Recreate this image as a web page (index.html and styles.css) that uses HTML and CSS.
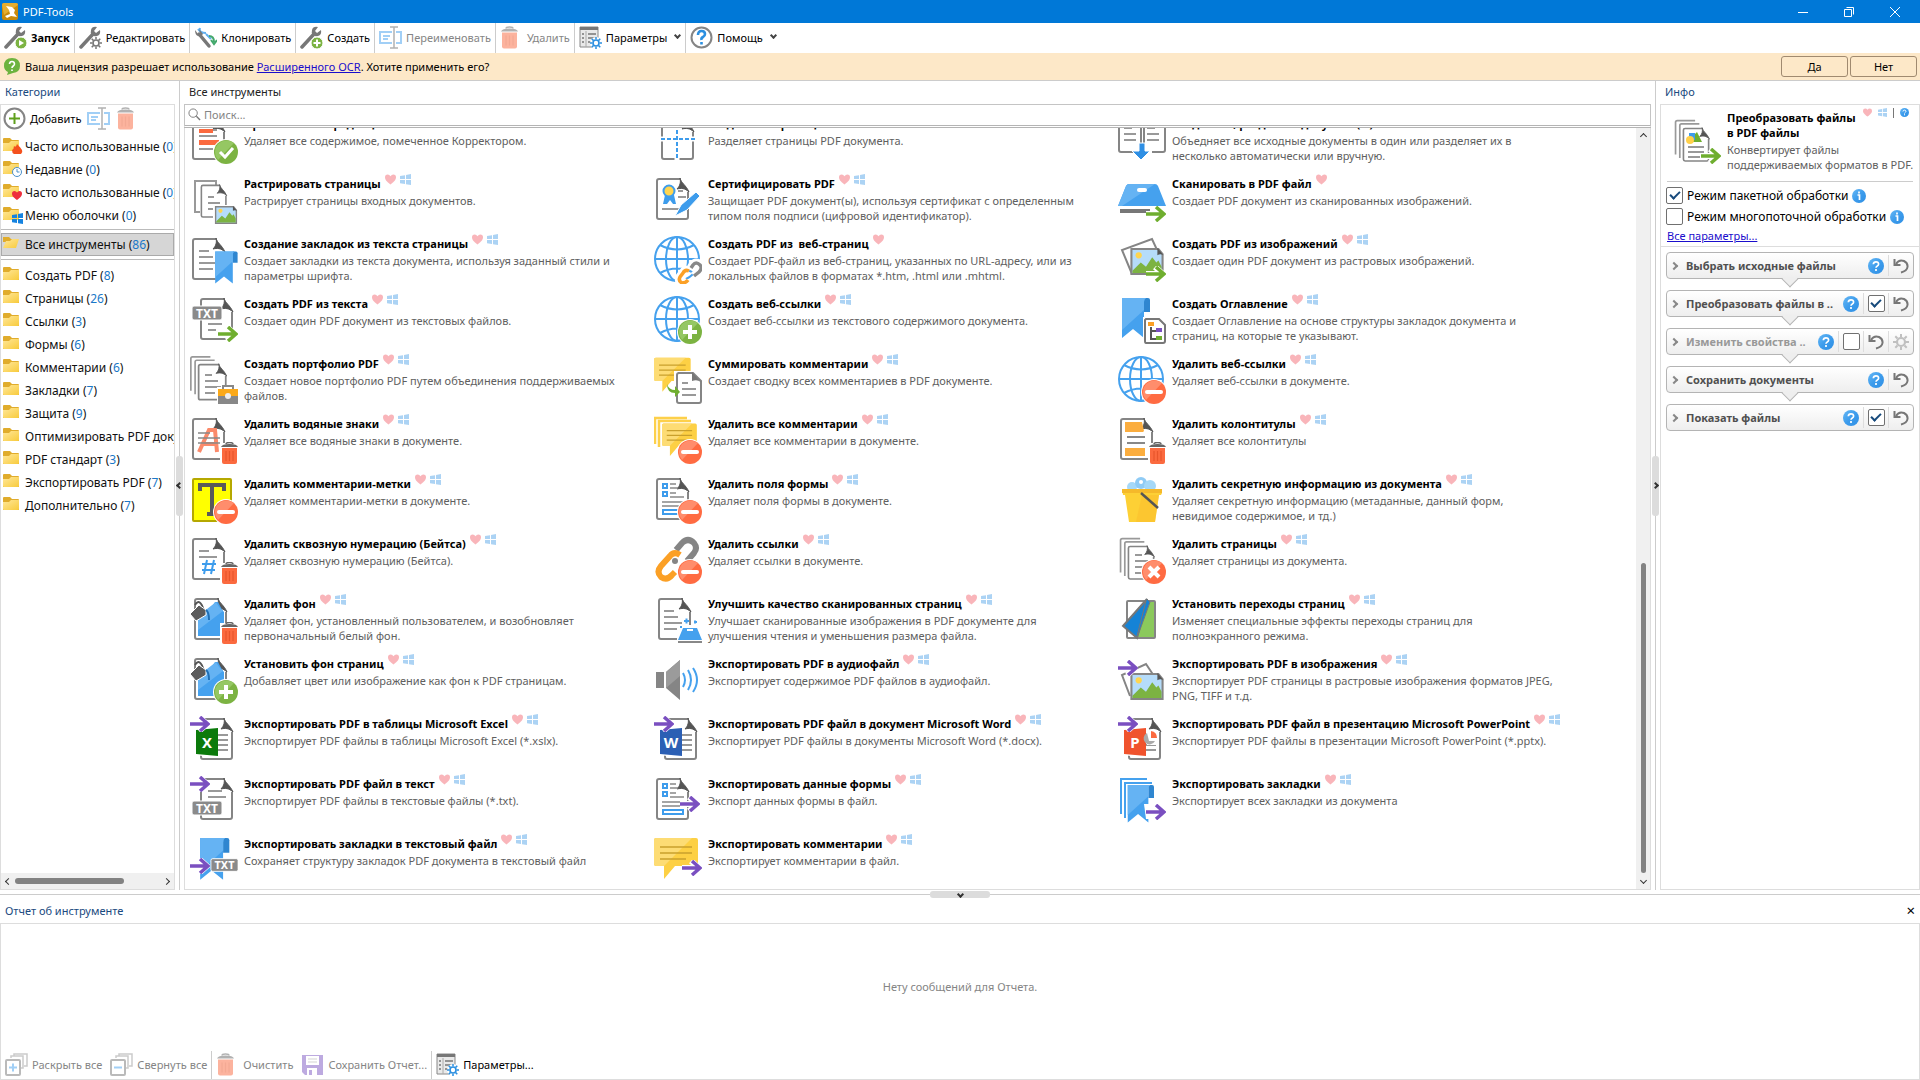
FILE: index.html
```html
<!DOCTYPE html>
<html lang="ru">
<head>
  <meta charset="UTF-8">
  <meta name="viewport" content="width=device-width, initial-scale=1.0">
  <title>PDF-Tools</title>
  <link rel="stylesheet" href="styles.css">
</head>
<body>
  <svg class="gradients" aria-hidden="true">
    <defs>
      <linearGradient id="gFolder" x1="0" y1="0" x2="1" y2="1"><stop offset="0" stop-color="#ffe79a"/><stop offset="1" stop-color="#f8cb3c"/></linearGradient>
      <linearGradient id="gHelp" x1="0" y1="0" x2="1" y2="1"><stop offset="0" stop-color="#66b8f5"/><stop offset=".5" stop-color="#3d9cec"/><stop offset="1" stop-color="#2f8fe4"/></linearGradient>
    </defs>
  </svg>

  <!-- icon sprite -->
  <svg class="sprite" aria-hidden="true">
    <!-- building blocks -->
    <symbol id="page" viewBox="0 0 48 48"><path d="M24 3H5Q3 3 3 5v36q0 2 2 2h27q2 0 2-2V16L26 3z" fill="#fff"/><path d="M26 3H5Q3 3 3 5v36q0 2 2 2h27q2 0 2-2V16" fill="none" stroke="#858585" stroke-width="2"/><path d="M26 2C27 7 32 9 35 16C31 12 27 12 23 13C26 10 27 6 26 2" fill="#555" stroke="#555"/></symbol>
    <symbol id="lines" viewBox="0 0 48 48"><path d="M9 15h10M9 21h14M9 27h18M9 33h14" stroke="#999" stroke-width="2"/></symbol>
    <symbol id="back" viewBox="0 0 48 48"><path d="M3 43V5q0-2 2-2h21" fill="none" stroke="#999" stroke-width="2"/></symbol>
    <symbol id="check" viewBox="0 0 48 48"><circle cx="36" cy="36" r="13" fill="#fff"/><circle cx="36" cy="36" r="12" fill="#7cb342"/><path d="M28 28a12 12 0 0 1 16-1L28 44a12 12 0 0 1 0-16" fill="#95c763"/><path d="M30 36l5 5 8-9" fill="none" stroke="#fff" stroke-width="3"/></symbol>
    <symbol id="plus" viewBox="0 0 48 48"><circle cx="36" cy="36" r="13" fill="#fff"/><circle cx="36" cy="36" r="12" fill="#7cb342"/><path d="M28 28a12 12 0 0 1 16-1L28 44a12 12 0 0 1 0-16" fill="#95c763"/><path d="M29 36h14M36 29v14" stroke="#fff" stroke-width="4"/></symbol>
    <symbol id="minus" viewBox="0 0 48 48"><circle cx="36" cy="36" r="13" fill="#fff"/><circle cx="36" cy="36" r="12" fill="#ff6b42"/><path d="M28 28a12 12 0 0 1 16-1L28 44a12 12 0 0 1 0-16" fill="#ff8d6c"/><path d="M29 36h14" stroke="#fff" stroke-width="4" stroke-linecap="round"/></symbol>
    <symbol id="cross" viewBox="0 0 48 48"><circle cx="36" cy="36" r="13" fill="#fff"/><circle cx="36" cy="36" r="12" fill="#ff6b42"/><path d="M28 28a12 12 0 0 1 16-1L28 44a12 12 0 0 1 0-16" fill="#ff8d6c"/><path d="M31 31l10 10M41 31l-10 10" stroke="#fff" stroke-width="4"/></symbol>
    <symbol id="trash" viewBox="0 0 17 22"><path d="M5 2q0-1.500 3.500-1.500T12 2" fill="none" stroke="#666" stroke-width="1.500"/><path d="M0 5Q1 2 8.500 2T17 5z" fill="#666"/><path d="M1 6h15v14q0 2-2 2H3q-2 0-2-2z" fill="#fb6a3f"/><path d="M5 9v10M8.500 9v10M12 9v10" stroke="#e8552b" stroke-width="1.200"/></symbol>
    <symbol id="trashBadge" viewBox="0 0 48 48"><path d="M30 27h18v21H30z" fill="#fff"/><use href="#trash" x="31" y="26" width="17" height="22"/></symbol>
    <symbol id="arrow" viewBox="0 0 20 16"><path d="M0 8h17M9 1l8 7-8 7" fill="none" stroke="#fff" stroke-width="6"/><path d="M0 8h17M10 1l8 7-8 7" fill="none" stroke="currentColor" stroke-width="3.500"/></symbol>
    <symbol id="globe" viewBox="0 0 48 48"><g fill="none" stroke="#45a1ee" stroke-width="2"><circle cx="23" cy="23" r="22"/><ellipse cx="23" cy="23" rx="11" ry="22"/><path d="M23 1v44M1 23h44M6 9q17 9 34 0M6 37q17-9 34 0"/></g></symbol>
    <symbol id="bookmark" viewBox="0 0 48 48"><path d="M26 2h4q2 0 2 2v12h-6z" fill="#2f86d0"/><path d="M4 2h24q-2 1-2 4v36l-11-9-11 9z" fill="#45a1ee"/><path d="M4 2h24q-2 1-2 4v8L4 34z" fill="#65b3f3"/></symbol>
    <symbol id="comment" viewBox="0 0 48 48"><path d="M2 2h40q2 0 2 2v24q0 2-2 2H21L10 43V30H2q-2 0-2-2V4q0-2 2-2" fill="#fdd044"/><path d="M2 2h36L10 30H2q-2 0-2-2V4q0-2 2-2" fill="#fddc74"/><path d="M6 11h32M6 17h32M6 23h26" stroke="#c9a02c" stroke-width="1.600"/></symbol>
    <symbol id="picture" viewBox="0 0 32 26"><path d="M1 1h26l4 5v19H1z" fill="#b5dcfa" stroke="#858585" stroke-width="2"/><circle cx="8" cy="7" r="3" fill="#ffd54f"/><path d="M2 22l8-8 5 4 6-9 4 5 2-2 3 6v6H2z" fill="#7cb342"/><path d="M26 0l6 7q-3-2-6 0z" fill="#555"/></symbol>
    <symbol id="txt" viewBox="0 0 32 16"><rect x="1" y="1" width="30" height="14" rx="2" fill="#8a8a8a" stroke="#fff"/><text x="16" y="12.500" text-anchor="middle" class="txt-label">TXT</text></symbol>
    <symbol id="heart" viewBox="0 0 10 10"><path d="M5 9.500C1 6.500 0 5 0 3q0-2.500 2.500-2.500Q4 .5 5 2q1-1.500 2.500-1.500Q10 .5 10 3c0 2-1 3.500-5 6.500" fill="#ee2f3d"/></symbol>
    <symbol id="win" viewBox="0 0 11 11"><path d="M0 2l5-.8V5H0zM6 1l5-1v5H6zM0 6h5v4L0 9.300zM6 6h5v5l-5-.8z" fill="#1583e0"/></symbol>
    <symbol id="help" viewBox="0 0 16 16"><circle cx="8" cy="8" r="8" fill="url(#gHelp)"/><path d="M5.300 6.200Q5.500 3.800 8 3.800t2.600 2.200q0 1.200-1.300 1.900T8 9.800M8 11v2" fill="none" stroke="#fff" stroke-width="1.700"/></symbol>
    <symbol id="info" viewBox="0 0 14 14"><circle cx="7" cy="7" r="7" fill="url(#gHelp)"/><path d="M5.500 6H7.500v5M7 2.600v1.800" fill="none" stroke="#fff" stroke-width="1.700"/></symbol>
    <symbol id="wrench" viewBox="0 0 23 23"><path d="M2 21L14 8" stroke="#777" stroke-width="3.500" stroke-linecap="round"/><path d="M21 4l-4 3-2-2 3-4Q13 0 12 4q-1 3 1 5t5 1q4-1 3-6" fill="#777"/></symbol>
    <symbol id="gear" viewBox="0 0 16 16"><circle cx="8" cy="8" r="4" fill="none" stroke="currentColor" stroke-width="2.200"/><path d="M8 0v3M8 13v3M0 8h3M13 8h3M2.300 2.300l2.200 2.200M11.500 11.500l2.200 2.200M2.300 13.700l2.200-2.200M11.500 4.500l2.200-2.200" stroke="currentColor" stroke-width="2"/></symbol>
    <symbol id="undo" viewBox="0 0 16 16"><path d="M3 6Q6 1 11 3q4 2 3.500 6T8 14.500" fill="none" stroke="#777" stroke-width="2"/><path d="M1.500 1v6H7.500" fill="none" stroke="#777" stroke-width="2"/></symbol>
    <symbol id="folder" viewBox="0 0 20 18"><path d="M0 1q0-1 1-1h6l2 2h6q1 0 1 1v10H0z" fill="#e0ac2c"/><path d="M0 5h6l2-2h8v9q0 1-1 1H1q-1 0-1-1z" fill="url(#gFolder)"/></symbol>

    <!-- toolbar icons -->
    <symbol id="tRun" viewBox="0 0 23 23"><use href="#wrench"/><circle cx="17" cy="17" r="6" fill="#7cb342" stroke="#fff"/><path d="M15 14l5 3-5 3z" fill="#fff"/></symbol>
    <symbol id="tEdit" viewBox="0 0 23 23"><use href="#wrench"/><circle cx="17" cy="17" r="6" fill="#fff"/><use href="#gear" x="11" y="11" width="12" height="12" color="#777"/></symbol>
    <symbol id="tClone" viewBox="0 0 23 23"><path d="M12 8l5 5M6 2q-1 3 1 4t5 1M4 3l4 5" stroke="#62b0ef" stroke-width="2" fill="none"/><path d="M5 8l10 12" stroke="#777" stroke-width="3.500" stroke-linecap="round"/><path d="M1 4q0 5 3 6t5-2L5 3l1 4-2 1z" fill="#777"/><path d="M15 10q5 0 5 6m-3-2l3 4 3-4" fill="none" stroke="#43a86b" stroke-width="2"/></symbol>
    <symbol id="tNew" viewBox="0 0 23 23"><use href="#wrench"/><circle cx="17" cy="17" r="6" fill="#7cb342" stroke="#fff"/><path d="M13.500 17h7M17 13.500v7" stroke="#fff" stroke-width="2"/></symbol>
    <symbol id="tRename" viewBox="0 0 23 23"><path d="M13 6H1v11h12M17 6h5v11h-5M4 10h7M4 13h5" fill="none" stroke="#45a1ee" stroke-width="2"/><path d="M11 1h8M15 1v21M11 22h8" stroke="#666" stroke-width="1.500"/></symbol>
    <symbol id="tTrash" viewBox="0 0 23 23"><use href="#trash" x="1" y="0" width="17" height="23"/></symbol>
    <symbol id="tParams" viewBox="0 0 23 23"><path d="M1 1h18v20H1z" fill="#e9e9e9" stroke="#888"/><path d="M1 1h18v3H1z" fill="#777"/><path d="M7 5v16" stroke="#aaa"/><path d="M3 8h2M3 12h2M3 16h2M9 8h8M9 12h8M9 16h5" stroke="#777" stroke-width="1.500"/><circle cx="17" cy="17" r="6" fill="#fff"/><use href="#gear" x="11" y="11" width="12" height="12" color="#2b8fe0"/></symbol>
    <symbol id="tHelp" viewBox="0 0 23 23"><circle cx="11.500" cy="11.500" r="10" fill="#fff" stroke="#858585" stroke-width="2"/><path d="M8 9q0-4 3.500-4t3.500 3q0 2-2 3t-1.500 3M11.500 16v2.500" fill="none" stroke="#2b8fe0" stroke-width="2.600"/></symbol>
    <symbol id="tAdd" viewBox="0 0 23 23"><circle cx="11.500" cy="11.500" r="10" fill="#fff" stroke="#858585" stroke-width="2"/><path d="M6 11.500h11M11.500 6v11" stroke="#5fa01c" stroke-width="2"/></symbol>
    <symbol id="tExpand" viewBox="0 0 23 23"><path d="M6 5V3h12v12h-2M9 3V1h13v12h-3" fill="none" stroke="#999" stroke-width="1.500"/><rect x="1" y="7" width="14" height="15" rx="1" fill="#fff" stroke="#777" stroke-width="2"/><path d="M4 14.500h8M8 10.500v8" stroke="#45a1ee" stroke-width="2"/></symbol>
    <symbol id="tCollapse" viewBox="0 0 23 23"><path d="M6 5V3h12v12h-2M9 3V1h13v12h-3" fill="none" stroke="#999" stroke-width="1.500"/><rect x="1" y="7" width="14" height="15" rx="1" fill="#fff" stroke="#777" stroke-width="2"/><path d="M4 14.500h8" stroke="#45a1ee" stroke-width="2"/></symbol>
    <symbol id="tSave" viewBox="0 0 23 23"><path d="M1 2h21v20H4l-3-3z" fill="#7e57c2"/><path d="M5 3h13v9H5zM6 15h10v7H6z" fill="#fff"/><path d="M7 6h9M7 9h9" stroke="#aaa"/><path d="M8 17h3v5H8z" fill="#7e57c2"/></symbol>

    <!-- tool icons -->
    <symbol id="iRedact" viewBox="0 0 48 48"><use href="#page"/><path d="M9 14h18M9 20h18M9 26h12M9 33h14" stroke="#999" stroke-width="2"/><path d="M9 13h14v4H9zM9 24h20v5H9z" fill="#fb6a3f"/><use href="#check"/></symbol>
    <symbol id="iSplit" viewBox="0 0 48 48"><use href="#page" x="5"/><path d="M6 23h38M23 1v45" stroke="#fff" stroke-width="5"/><path d="M7 23h35M23 2v42" stroke="#3d9cec" stroke-width="2" stroke-dasharray="4 2"/></symbol>
    <symbol id="iMerge" viewBox="0 0 48 48"><g fill="#fff" stroke="#858585" stroke-width="2"><path d="M14 3H3q-2 0-2 2v29q0 2 2 2h13M34 36h11q2 0 2-2V10l-6-7H26v28M23 31V10l-6-7"/></g><path d="M6 12h8M6 18h12M6 24h12M29 12h8M29 18h12M29 24h12" stroke="#999" stroke-width="2"/><path d="M15 3l8 9q-5-2-8 0zM40 3l8 9q-5-2-8 0z" fill="#555"/><path d="M21 27h6v8h5l-9 9-9-9h7z" fill="#2f8fe4" stroke="#fff"/></symbol>
    <symbol id="iRaster" viewBox="0 0 48 48"><path d="M10 36H5V5h21v4" fill="none" stroke="#999" stroke-width="2"/><use href="#page" x="9" y="7" width="38" height="38"/><path d="M18 21h6M18 27h12M18 33h6" stroke="#999" stroke-width="2"/><path d="M23 29h25v19H23z" fill="#fff"/><use href="#picture" x="24" y="30" width="24" height="18"/></symbol>
    <symbol id="iMarkText" viewBox="0 0 48 48"><use href="#page"/><use href="#lines"/><path d="M25 18h17l5-2v12h-3v19H26z" fill="#fff"/><g transform="translate(22 14) scale(.8)"><use href="#bookmark" width="48" height="48"/></g></symbol>
    <symbol id="iTxt" viewBox="0 0 48 48"><use href="#page" x="8"/><path d="M18 28h14M18 34h8" stroke="#999" stroke-width="2"/><use href="#txt" x="1" y="9" width="32" height="16"/><use href="#arrow" x="28" y="30" width="20" height="16" color="#6fae2f"/></symbol>
    <symbol id="iPortfolio" viewBox="0 0 48 48"><g transform="scale(.85)"><use href="#back" x="-2" y="-2" width="48" height="48"/><use href="#back" x="3" y="2" width="48" height="48"/></g><use href="#page" x="6" y="6" width="42" height="42"/><path d="M15 19h7M15 25h13M15 31h16M15 37h10" stroke="#999" stroke-width="2"/><path d="M27 31h21v17H27z" fill="#fff"/><path d="M33 33v-3h10v3" fill="none" stroke="#888" stroke-width="2"/><path d="M28 33h20v7H28z" fill="#fba919"/><path d="M28 40h20v8H28z" fill="#888"/><circle cx="38" cy="40" r="3" fill="#eee"/></symbol>
    <symbol id="iWatermark" viewBox="0 0 48 48"><use href="#page"/><path d="M9 36l10-22h6l2 22M14 28h12" fill="none" stroke="#fb8a6a" stroke-width="4"/><path d="M8 17h12M8 22h22M8 27h22" stroke="#888" stroke-width="1.500"/><use href="#trashBadge"/></symbol>
    <symbol id="iMarkup" viewBox="0 0 48 48"><rect x="3" y="3" width="38" height="42" rx="1" fill="#ff0" stroke="#b5a800" stroke-width="2"/><path d="M10 15v-6h24v6M22 9v28M17 38h10" fill="none" stroke="#5a5a5a" stroke-width="4"/><use href="#minus"/></symbol>
    <symbol id="iBates" viewBox="0 0 48 48"><use href="#page"/><path d="M9 15h10M9 21h18" stroke="#999" stroke-width="2"/><path d="M17 24l-3 14M24 24l-3 14M12 28h14M12 34h13" stroke="#3d9cec" stroke-width="2"/><use href="#trashBadge"/></symbol>
    <symbol id="fon" viewBox="0 0 48 48"><use href="#page" x="2"/><path d="M8 16h10l7-10h3q4 8 6 10v24H8z" fill="#45a1ee"/><path d="M8 20l18-14q3 6 7 9L8 34z" fill="#65b3f3"/><path d="M5 9q5-8 9 6" fill="none" stroke="#555" stroke-width="2"/><path d="M0 18l9-9 7 5v5L6 25z" fill="#5c5c5c" stroke="#fff"/><path d="M16 14q3 2 3 10" fill="none" stroke="#1f6fb5" stroke-width="2"/></symbol>
    <symbol id="iFonDel" viewBox="0 0 48 48"><use href="#fon"/><use href="#trashBadge"/></symbol>
    <symbol id="iFonAdd" viewBox="0 0 48 48"><use href="#fon"/><use href="#plus"/></symbol>
    <symbol id="office" viewBox="0 0 48 48"><use href="#page" x="8"/><path d="M28 19h10M28 24h10M28 29h10M28 34h10" stroke="#999" stroke-width="2"/><path d="M5 13l23-3v32L5 39z" fill="#fff"/><path d="M6 14l22-2v28L6 38z" fill="currentColor"/><use href="#arrow" y="0" width="20" height="16" color="#7a4fc0"/></symbol>
    <symbol id="iExcel" viewBox="0 0 48 48"><use href="#office" color="#0b7a0b"/><text x="17" y="32" text-anchor="middle" class="office-letter">X</text></symbol>
    <symbol id="iWord" viewBox="0 0 48 48"><use href="#office" color="#2b5fb4"/><text x="17" y="32" text-anchor="middle" class="office-letter">W</text></symbol>
    <symbol id="iPower" viewBox="0 0 48 48"><use href="#office" color="#f0532d"/><path d="M29 18h12v11H29z" fill="#fff"/><path d="M29 17a6 6 0 1 0 8 8h-6z" fill="#aaa"/><path d="M33 15v7h6q0-6-6-7" fill="#fb6a3f"/><text x="17" y="32" text-anchor="middle" class="office-letter">P</text></symbol>
    <symbol id="iToTxt" viewBox="0 0 48 48"><use href="#page" x="8"/><path d="M18 15h14M18 21h18" stroke="#999" stroke-width="2"/><use href="#txt" x="1" y="24" width="32" height="16"/><use href="#arrow" width="20" height="16" color="#7a4fc0"/></symbol>
    <symbol id="iMarkTxt" viewBox="0 0 48 48"><use href="#bookmark" x="6" y="0" width="50" height="50"/><use href="#arrow" y="22" width="20" height="16" color="#7a4fc0"/><use href="#txt" x="20" y="21" width="29" height="16"/></symbol>
    <symbol id="iCert" viewBox="0 0 48 48"><use href="#page"/><path d="M24 15h5M24 21h8M8 33h17" stroke="#999" stroke-width="2"/><path d="M11 19l-2 9h4l3-4 3 4h3l-2-9z" fill="#3d9cec"/><circle cx="15" cy="15" r="5.500" fill="#ffd54f" stroke="#3d9cec" stroke-width="2"/><path d="M21 40l6-11L42 16l4 4-13 14z" fill="#3d9cec" stroke="#fff"/></symbol>
    <symbol id="iWebPdf" viewBox="0 0 48 48"><use href="#globe"/><g fill="none" stroke="#fff" stroke-width="9"><path d="M37 32l2-3q3-4 7 0 3 3-1 7l-5 4M35 35q-4-2-6 2l-3 4q-2 4 2 6 4 0 6-3"/></g><path d="M37 32l2-3q3-4 7 0 3 3-1 7l-5 4" fill="none" stroke="#888" stroke-width="3.500"/><path d="M35 35q-4-2-6 2l-3 4q-2 4 2 6 4 0 6-3" fill="none" stroke="#fba026" stroke-width="3.500"/></symbol>
    <symbol id="iWebAdd" viewBox="0 0 48 48"><use href="#globe"/><use href="#plus"/></symbol>
    <symbol id="iWebDel" viewBox="0 0 48 48"><use href="#globe"/><use href="#minus"/></symbol>
    <symbol id="iSummary" viewBox="0 0 48 48"><use href="#comment" width="40" height="40"/><path d="M20 15h28v33H20z" fill="#fff"/><path d="M24 17h15l8 8v20q0 2-2 2H25q-2 0-2-2V19q0-2 2-2" fill="#fff" stroke="#858585" stroke-width="2"/><path d="M38 16l9 10q-4-3-9-1z" fill="#777"/><path d="M28 27h6M28 33h14M28 39h14" stroke="#999" stroke-width="2"/><path d="M13 28q2 6 8 6v-4l5 6-5 5v-4q-8 0-8-9" fill="#6fae2f"/></symbol>
    <symbol id="iCommentsDel" viewBox="0 0 48 48"><path d="M1 28V2h32M5 31V5h32" fill="none" stroke="#fdd04a" stroke-width="2.500"/><use href="#comment" x="8" y="6" width="38" height="38"/><use href="#minus"/></symbol>
    <symbol id="form" viewBox="0 0 48 48"><use href="#page"/><path d="M16 8h6M16 12h8M16 17h6M16 21h14M8 26h22M8 30h22" stroke="#888" stroke-width="1.600"/><path d="M9 8h4v4H9zM9 16h4v4H9zM9 34h20v4H9z" fill="#fff" stroke="#3d9cec" stroke-width="2"/></symbol>
    <symbol id="iFormDel" viewBox="0 0 48 48"><use href="#form"/><use href="#minus"/></symbol>
    <symbol id="iFormExp" viewBox="0 0 48 48"><use href="#form"/><use href="#arrow" x="26" y="20" width="20" height="16" color="#7a4fc0"/></symbol>
    <symbol id="iLinkDel" viewBox="0 0 48 48"><g fill="none" stroke-width="6"><path d="M22 14l6-7q6-6 12 0 4 5 0 10l-7 8" stroke="#858585"/><path d="M26 19q-6-4-10 1L7 30q-5 6 0 11 6 4 11-2l3-3" stroke="#fba026"/></g><circle cx="21" cy="25" r="3" fill="#858585"/><use href="#minus"/></symbol>
    <symbol id="iEnhance" viewBox="0 0 48 48"><use href="#page" x="2"/><use href="#lines" x="1"/><path d="M23 29h25v18H23z" fill="#fff"/><path d="M29 32h14l5 12H24z" fill="#45a1ee"/><path d="M33 34h6" stroke="#fff" stroke-width="2"/><path d="M24 46h24" stroke="#888" stroke-width="2"/><path d="M30 25h5M32.500 22.500v5M40 26h3M41 24.500v3M26 31h2" stroke="#45a1ee" stroke-width="2"/></symbol>
    <symbol id="iAudio" viewBox="0 0 48 48"><path d="M2 16h8v16H2zM12 16L26 4v40L12 32z" fill="#858585"/><path d="M12 16L26 4v16L12 32z" fill="#9b9b9b"/><path d="M29 17q4 7 0 14M34 14q6 10 0 20M39 12q8 12 0 24" fill="none" stroke="#45a1ee" stroke-width="2"/></symbol>
    <symbol id="iCommentsExp" viewBox="0 0 48 48"><use href="#comment"/><use href="#arrow" x="28" y="24" width="20" height="16" color="#7a4fc0"/></symbol>
    <symbol id="iScan" viewBox="0 0 48 48"><path d="M11 8h26q2 0 3 2l8 20H0l8-20q1-2 3-2" fill="#45a1ee"/><path d="M11 8h26L4 30H0l8-20q1-2 3-2" fill="#65b3f3"/><rect x="19" y="12" width="10" height="4" rx="2" fill="#fff"/><path d="M2 35h30" stroke="#777" stroke-width="4"/><use href="#arrow" x="28" y="30" width="20" height="16" color="#6fae2f"/></symbol>
    <symbol id="iImages" viewBox="0 0 48 48"><path d="M14 38L4 14 34 3l6 13" fill="#fff" stroke="#858585" stroke-width="2"/><use href="#picture" x="12" y="12" width="34" height="27"/><use href="#arrow" x="28" y="30" width="20" height="16" color="#6fae2f"/></symbol>
    <symbol id="iToc" viewBox="0 0 48 48"><use href="#bookmark"/><path d="M25 21h23v27H25z" fill="#fff"/><path d="M28 23h13l6 6v16q0 2-2 2H28q-1 0-1-2V24z" fill="#fff" stroke="#777" stroke-width="2"/><path d="M33 31v12h5M33 35h5" fill="none" stroke="#555" stroke-width="2"/><path d="M30 26h6v4h-6z" fill="#fba026"/><path d="M38 32h6v4h-6z" fill="#7a4fc0"/><path d="M38 40h6v4h-6z" fill="#6fae2f"/></symbol>
    <symbol id="iHeaderDel" viewBox="0 0 48 48"><use href="#page"/><path d="M7 6h17l2 9-1 1H7zM7 32h20v8H7z" fill="#fbad3e"/><path d="M9 21h18M9 27h18" stroke="#888" stroke-width="2"/><use href="#trashBadge"/></symbol>
    <symbol id="iBucket" viewBox="0 0 48 48"><circle cx="14" cy="11" r="5" fill="#a5d8f8"/><circle cx="23" cy="7" r="6" fill="#8fcbf5"/><circle cx="32" cy="10" r="6" fill="#a5d8f8"/><circle cx="23" cy="6" r="2" fill="#fff"/><path d="M4 13h40v4l-1 2h-2l-4 27H11L7 19H5z" fill="#fdd035"/><path d="M4 13h40v4H4z" fill="#f5b92a"/><path d="M24 19h17l-4 27H18z" fill="#fbc02d" opacity=".6"/><path d="M23 17l17 15" stroke="#555" stroke-width="2.500"/></symbol>
    <symbol id="iPagesDel" viewBox="0 0 48 48"><g transform="scale(.85)"><use href="#back" width="48" height="48"/><use href="#back" x="5" y="4" width="48" height="48"/></g><use href="#page" x="8" y="8" width="39" height="39"/><path d="M17 19h7M17 25h13M17 31h8M17 37h7" stroke="#999" stroke-width="2"/><use href="#cross"/></symbol>
    <symbol id="iTransition" viewBox="0 0 48 48"><rect x="9" y="5" width="28" height="37" rx="1" fill="#fff" stroke="#858585" stroke-width="2"/><path d="M32 6h4v35H18z" fill="#8bc95c"/><path d="M29 3L5 30l14 12z" fill="#1583d6" stroke="#777" stroke-width="2"/><path d="M29 3l3 3-13 36" fill="#1583d6" stroke="#777"/></symbol>
    <symbol id="iToImages" viewBox="0 0 48 48"><path d="M12 40L4 19 28 8l8 12" fill="#fff" stroke="#858585" stroke-width="2"/><use href="#picture" x="12" y="17" width="34" height="27"/><use href="#arrow" y="4" width="20" height="16" color="#7a4fc0"/></symbol>
    <symbol id="iMarksExp" viewBox="0 0 48 48"><path d="M3 38V3h26M7 42V7h27" fill="none" stroke="#45a1ee" stroke-width="2"/><use href="#bookmark" x="6" y="7" width="45" height="45"/><path d="M26 28h22v15H28z" fill="#fff"/><use href="#arrow" x="28" y="28" width="20" height="16" color="#7a4fc0"/></symbol>
    <symbol id="iConvert" viewBox="0 0 48 48"><g transform="scale(.85)"><use href="#back" width="48" height="48"/><use href="#back" x="5" y="4" width="48" height="48"/></g><use href="#page" x="8" y="8" width="39" height="39"/><path d="M19 19l5-5 5 10h-10z" fill="#6fae2f"/><path d="M16 15h6v7h-6z" fill="#3d9cec"/><circle cx="17" cy="22" r="4" fill="#ffd04a"/><path d="M15 29h16M15 34h16M15 39h12" stroke="#999" stroke-width="2"/><use href="#arrow" x="28" y="30" width="20" height="16" color="#6fae2f"/></symbol>
  </svg>

  <header class="titlebar">
    <svg class="logo" viewBox="0 0 17 17"><rect width="16" height="17" rx="2" fill="#c98a0c"/><path d="M0 2q0-2 2-2h12q2 0 2 2L2 12z" fill="#e5ad2f"/><path d="M4 3l6 1 3 3-1 3 3 4-6-1-4 2-2-2 5-2-1-4z" fill="#fff"/></svg>
    <h1>PDF-Tools</h1>
    <button type="button" class="win-btn" aria-label="Свернуть"><svg viewBox="0 0 12 12"><path d="M1 6.500h10"/></svg></button>
    <button type="button" class="win-btn" aria-label="Восстановить"><svg viewBox="0 0 12 12"><path d="M1.500 3.500h7v7h-7zM3.500 1.500h7v7"/></svg></button>
    <button type="button" class="win-btn" aria-label="Закрыть"><svg viewBox="0 0 12 12"><path d="M1 1l10 10M11 1L1 11"/></svg></button>
  </header>

  <nav class="toolbar">
    <button type="button" class="run"><svg><use href="#tRun"/></svg>Запуск</button>
    <button type="button"><svg><use href="#tEdit"/></svg>Редактировать</button>
    <button type="button"><svg><use href="#tClone"/></svg>Клонировать</button>
    <button type="button"><svg><use href="#tNew"/></svg>Создать</button>
    <button type="button" disabled><svg><use href="#tRename"/></svg>Переименовать</button>
    <button type="button" disabled><svg><use href="#tTrash"/></svg>Удалить</button>
    <button type="button"><svg><use href="#tParams"/></svg>Параметры<span class="caret"></span></button>
    <button type="button"><svg><use href="#tHelp"/></svg>Помощь<span class="caret"></span></button>
  </nav>

  <div class="banner">
    <svg viewBox="0 0 16 17"><path d="M8 0q8 0 8 8 0 6-7 7l-6 2 1-3Q0 12 0 8q0-8 8-8" fill="#6db33f"/><path d="M5.500 6q.2-2.500 2.500-2.500T10.500 6q0 1-1.300 2T8 10M8 11.500v1.500" fill="none" stroke="#fff" stroke-width="1.600"/></svg>
    <p>Ваша лицензия разрешает использование <a href="#">Расширенного OCR</a>. Хотите применить его?</p>
    <button type="button">Да</button>
    <button type="button">Нет</button>
  </div>

  <main class="workspace">
    <aside class="panel categories">
      <h2>Категории</h2>
      <div class="panel-box">
        <div class="cat-toolbar">
          <button type="button"><svg><use href="#tAdd"/></svg>Добавить</button>
          <button type="button" disabled aria-label="Переименовать"><svg><use href="#tRename"/></svg></button>
          <button type="button" disabled aria-label="Удалить"><svg><use href="#tTrash"/></svg></button>
        </div>
        <ul>
          <li><a href="#"><svg viewBox="0 0 20 18"><use href="#folder" width="20" height="18"/><path d="M9 12q2-1 2-4 2 2 3-2 4 4 5 6t-1 4h-7q-2-1-2-4" fill="#f4511e"/></svg>Часто использованные (<b>0</b>)</a></li>
          <li><a href="#"><svg viewBox="0 0 20 18"><use href="#folder" width="20" height="18"/><circle cx="14" cy="11" r="4.500" fill="#fff" stroke="#4a8fc9"/><path d="M14 8v3h2.500" fill="none" stroke="#4a8fc9"/></svg>Недавние (<b>0</b>)</a></li>
          <li><a href="#"><svg viewBox="0 0 20 18"><use href="#folder" width="20" height="18"/><use href="#heart" x="9" y="6" width="10" height="11"/></svg>Часто использованные (<b>0</b>)</a></li>
          <li><a href="#"><svg viewBox="0 0 20 18"><use href="#folder" width="20" height="18"/><use href="#win" x="9" y="6" width="11" height="11"/></svg>Меню оболочки (<b>0</b>)</a></li>
        </ul>
        <ul class="all">
          <li><a href="#"><svg viewBox="0 0 20 18"><path d="M0 1h6l2 2h6v3H0z" fill="#e0ac2c"/><path d="M0 12L3 5h4l2-2h7l-3 9z" fill="url(#gFolder)"/></svg>Все инструменты (<b>86</b>)</a></li>
        </ul>
        <ul>
          <li><a href="#"><svg><use href="#folder"/></svg>Создать PDF (<b>8</b>)</a></li>
          <li><a href="#"><svg><use href="#folder"/></svg>Страницы (<b>26</b>)</a></li>
          <li><a href="#"><svg><use href="#folder"/></svg>Ссылки (<b>3</b>)</a></li>
          <li><a href="#"><svg><use href="#folder"/></svg>Формы (<b>6</b>)</a></li>
          <li><a href="#"><svg><use href="#folder"/></svg>Комментарии (<b>6</b>)</a></li>
          <li><a href="#"><svg><use href="#folder"/></svg>Закладки (<b>7</b>)</a></li>
          <li><a href="#"><svg><use href="#folder"/></svg>Защита (<b>9</b>)</a></li>
          <li><a href="#"><svg><use href="#folder"/></svg>Оптимизировать PDF документы (<b>6</b>)</a></li>
          <li><a href="#"><svg><use href="#folder"/></svg>PDF стандарт (<b>3</b>)</a></li>
          <li><a href="#"><svg><use href="#folder"/></svg>Экспортировать PDF (<b>7</b>)</a></li>
          <li><a href="#"><svg><use href="#folder"/></svg>Дополнительно (<b>7</b>)</a></li>
        </ul>
        <div class="scroll-x"><i class="chev left"></i><span></span><i class="chev right"></i></div>
      </div>
    </aside>

    <div class="splitter"><button type="button" aria-label="Скрыть категории"><i class="chev left"></i></button></div>

    <section class="panel tools">
      <h2>Все инструменты</h2>
      <div class="search">
        <svg viewBox="0 0 14 14"><circle cx="5.500" cy="5.500" r="4.500" fill="none" stroke="#777"/><path d="M9 9l4 4" stroke="#777" stroke-width="1.500"/></svg>
        <input type="text" placeholder="Поиск..." aria-label="Поиск">
      </div>
      <div class="tool-view">
        <div class="tool-grid">
          <article><svg><use href="#iRedact"/></svg><div><h3>Применить все редакции</h3><p>Удаляет все содержимое, помеченное Корректором.</p></div></article>
          <article><svg><use href="#iSplit"/></svg><div><h3>Разделить страницы</h3><p>Разделяет страницы PDF документа.</p></div></article>
          <article><svg><use href="#iMerge"/></svg><div><h3>Соединить, разделить документ(ы)</h3><p>Объедняет все исходные документы в один или разделяет их в<br>несколько автоматически или вручную.</p></div></article>

          <article><svg><use href="#iRaster"/></svg><div><h3>Растрировать страницы<svg><use href="#heart"/></svg><svg><use href="#win"/></svg></h3><p>Растрирует страницы входных документов.</p></div></article>
          <article><svg><use href="#iCert"/></svg><div><h3>Сертифицировать PDF<svg><use href="#heart"/></svg><svg><use href="#win"/></svg></h3><p>Защищает PDF документ(ы), используя сертификат с определенным<br>типом поля подписи (цифровой идентификатор).</p></div></article>
          <article><svg><use href="#iScan"/></svg><div><h3>Сканировать в PDF файл<svg><use href="#heart"/></svg></h3><p>Создает PDF документ из сканированных изображений.</p></div></article>

          <article><svg><use href="#iMarkText"/></svg><div><h3>Создание закладок из текста страницы<svg><use href="#heart"/></svg><svg><use href="#win"/></svg></h3><p>Создает закладки из текста документа, используя заданный стили и<br>параметры шрифта.</p></div></article>
          <article><svg><use href="#iWebPdf"/></svg><div><h3>Создать PDF из &nbsp;веб-страниц<svg><use href="#heart"/></svg></h3><p>Создает PDF-файл из веб-страниц, указанных по URL-адресу, или из<br>локальных файлов в форматах *.htm, .html или .mhtml.</p></div></article>
          <article><svg><use href="#iImages"/></svg><div><h3>Создать PDF из изображений<svg><use href="#heart"/></svg><svg><use href="#win"/></svg></h3><p>Создает один PDF документ из растровых изображений.</p></div></article>

          <article><svg><use href="#iTxt"/></svg><div><h3>Создать PDF из текста<svg><use href="#heart"/></svg><svg><use href="#win"/></svg></h3><p>Создает один PDF документ из текстовых файлов.</p></div></article>
          <article><svg><use href="#iWebAdd"/></svg><div><h3>Создать веб-ссылки<svg><use href="#heart"/></svg><svg><use href="#win"/></svg></h3><p>Создает веб-ссылки из текстового содержимого документа.</p></div></article>
          <article><svg><use href="#iToc"/></svg><div><h3>Создать Оглавление<svg><use href="#heart"/></svg><svg><use href="#win"/></svg></h3><p>Создает Оглавление на основе структуры закладок документа и<br>страниц, на которые те указывают.</p></div></article>

          <article><svg><use href="#iPortfolio"/></svg><div><h3>Создать портфолио PDF<svg><use href="#heart"/></svg><svg><use href="#win"/></svg></h3><p>Создает новое портфолио PDF путем объединения поддерживаемых<br>файлов.</p></div></article>
          <article><svg><use href="#iSummary"/></svg><div><h3>Суммировать комментарии<svg><use href="#heart"/></svg><svg><use href="#win"/></svg></h3><p>Создает сводку всех комментариев в PDF документе.</p></div></article>
          <article><svg><use href="#iWebDel"/></svg><div><h3>Удалить веб-ссылки<svg><use href="#heart"/></svg><svg><use href="#win"/></svg></h3><p>Удаляет веб-ссылки в документе.</p></div></article>

          <article><svg><use href="#iWatermark"/></svg><div><h3>Удалить водяные знаки<svg><use href="#heart"/></svg><svg><use href="#win"/></svg></h3><p>Удаляет все водяные знаки в документе.</p></div></article>
          <article><svg><use href="#iCommentsDel"/></svg><div><h3>Удалить все комментарии<svg><use href="#heart"/></svg><svg><use href="#win"/></svg></h3><p>Удаляет все комментарии в документе.</p></div></article>
          <article><svg><use href="#iHeaderDel"/></svg><div><h3>Удалить колонтитулы<svg><use href="#heart"/></svg><svg><use href="#win"/></svg></h3><p>Удаляет все колонтитулы</p></div></article>

          <article><svg><use href="#iMarkup"/></svg><div><h3>Удалить комментарии-метки<svg><use href="#heart"/></svg><svg><use href="#win"/></svg></h3><p>Удаляет комментарии-метки в документе.</p></div></article>
          <article><svg><use href="#iFormDel"/></svg><div><h3>Удалить поля формы<svg><use href="#heart"/></svg><svg><use href="#win"/></svg></h3><p>Удаляет поля формы в документе.</p></div></article>
          <article><svg><use href="#iBucket"/></svg><div><h3>Удалить секретную информацию из документа<svg><use href="#heart"/></svg><svg><use href="#win"/></svg></h3><p>Удаляет секретную информацию (метаданные, данный форм,<br>невидимое содержимое, и тд.)</p></div></article>

          <article><svg><use href="#iBates"/></svg><div><h3>Удалить сквозную нумерацию (Бейтса)<svg><use href="#heart"/></svg><svg><use href="#win"/></svg></h3><p>Удаляет сквозную нумерацию (Бейтса).</p></div></article>
          <article><svg><use href="#iLinkDel"/></svg><div><h3>Удалить ссылки<svg><use href="#heart"/></svg><svg><use href="#win"/></svg></h3><p>Удаляет ссылки в документе.</p></div></article>
          <article><svg><use href="#iPagesDel"/></svg><div><h3>Удалить страницы<svg><use href="#heart"/></svg><svg><use href="#win"/></svg></h3><p>Удаляет страницы из документа.</p></div></article>

          <article><svg><use href="#iFonDel"/></svg><div><h3>Удалить фон<svg><use href="#heart"/></svg><svg><use href="#win"/></svg></h3><p>Удаляет фон, установленный пользователем, и возобновляет<br>первоначальный белый фон.</p></div></article>
          <article><svg><use href="#iEnhance"/></svg><div><h3>Улучшить качество сканированных страниц<svg><use href="#heart"/></svg><svg><use href="#win"/></svg></h3><p>Улучшает сканированные изображения в PDF документе для<br>улучшения чтения и уменьшения размера файла.</p></div></article>
          <article><svg><use href="#iTransition"/></svg><div><h3>Установить переходы страниц<svg><use href="#heart"/></svg><svg><use href="#win"/></svg></h3><p>Изменяет специальные эффекты переходы страниц для<br>полноэкранного режима.</p></div></article>

          <article><svg><use href="#iFonAdd"/></svg><div><h3>Установить фон страниц<svg><use href="#heart"/></svg><svg><use href="#win"/></svg></h3><p>Добавляет цвет или изображение как фон к PDF страницам.</p></div></article>
          <article><svg><use href="#iAudio"/></svg><div><h3>Экспортировать PDF в аудиофайл<svg><use href="#heart"/></svg><svg><use href="#win"/></svg></h3><p>Экспортирует содержимое PDF файлов в аудиофайл.</p></div></article>
          <article><svg><use href="#iToImages"/></svg><div><h3>Экспортировать PDF в изображения<svg><use href="#heart"/></svg><svg><use href="#win"/></svg></h3><p>Экспортирует PDF страницы в растровые изображения форматов JPEG,<br>PNG, TIFF и т.д.</p></div></article>

          <article><svg><use href="#iExcel"/></svg><div><h3>Экспортировать PDF в таблицы Microsoft Excel<svg><use href="#heart"/></svg><svg><use href="#win"/></svg></h3><p>Экспортирует PDF файлы в таблицы Microsoft Excel (*.xslx).</p></div></article>
          <article><svg><use href="#iWord"/></svg><div><h3>Экспортировать PDF файл в документ Microsoft Word<svg><use href="#heart"/></svg><svg><use href="#win"/></svg></h3><p>Экспортирует PDF файлы в документы Microsoft Word (*.docx).</p></div></article>
          <article><svg><use href="#iPower"/></svg><div><h3>Экспортировать PDF файл в презентацию Microsoft PowerPoint<svg><use href="#heart"/></svg><svg><use href="#win"/></svg></h3><p>Экспортирует PDF файлы в презентации Microsoft PowerPoint (*.pptx).</p></div></article>

          <article><svg><use href="#iToTxt"/></svg><div><h3>Экспортировать PDF файл в текст<svg><use href="#heart"/></svg><svg><use href="#win"/></svg></h3><p>Экспортирует PDF файлы в текстовые файлы (*.txt).</p></div></article>
          <article><svg><use href="#iFormExp"/></svg><div><h3>Экспортировать данные формы<svg><use href="#heart"/></svg><svg><use href="#win"/></svg></h3><p>Экспорт данных формы в файл.</p></div></article>
          <article><svg><use href="#iMarksExp"/></svg><div><h3>Экспортировать закладки<svg><use href="#heart"/></svg><svg><use href="#win"/></svg></h3><p>Экспортирует всех закладки из документа</p></div></article>

          <article><svg><use href="#iMarkTxt"/></svg><div><h3>Экспортировать закладки в текстовый файл<svg><use href="#heart"/></svg><svg><use href="#win"/></svg></h3><p>Сохраняет структуру закладок PDF документа в текстовый файл</p></div></article>
          <article><svg><use href="#iCommentsExp"/></svg><div><h3>Экспортировать комментарии<svg><use href="#heart"/></svg><svg><use href="#win"/></svg></h3><p>Экспортирует комментарии в файл.</p></div></article>
        </div>
        <div class="scroll-y"><i class="chev up"></i><span></span><i class="chev down"></i></div>
      </div>
    </section>

    <div class="splitter"><button type="button" aria-label="Скрыть инфо"><i class="chev right"></i></button></div>

    <aside class="panel info">
      <h2>Инфо</h2>
      <div class="panel-box">
        <div class="info-head">
          <svg class="big"><use href="#iConvert"/></svg>
          <div>
            <h3>Преобразовать файлы<br>в PDF файлы</h3>
            <p>Конвертирует файлы<br>поддерживаемых форматов в PDF.</p>
          </div>
          <div class="marks"><svg><use href="#heart"/></svg><svg><use href="#win"/></svg><i></i><svg class="solid"><use href="#help"/></svg></div>
        </div>
        <div class="options">
          <label><input type="checkbox" checked>Режим пакетной обработки<svg><use href="#info"/></svg></label>
          <label><input type="checkbox">Режим многопоточной обработки<svg><use href="#info"/></svg></label>
          <a href="#">Все параметры...</a>
        </div>
        <ol class="steps">
          <li><i class="chev right"></i><h4>Выбрать исходные файлы</h4><span><svg><use href="#help"/></svg></span><button type="button" aria-label="Сбросить"><svg><use href="#undo"/></svg></button></li>
          <li><i class="chev right"></i><h4>Преобразовать файлы в ..</h4><span><svg><use href="#help"/></svg></span><span class="cell"><input type="checkbox" checked aria-label="Преобразовать файлы"></span><button type="button" aria-label="Сбросить"><svg><use href="#undo"/></svg></button></li>
          <li class="off"><i class="chev right"></i><h4>Изменить свойства ..</h4><span><svg><use href="#help"/></svg></span><span class="cell"><input type="checkbox" aria-label="Изменить свойства"></span><button type="button" aria-label="Сбросить"><svg><use href="#undo"/></svg></button><button type="button" aria-label="Настроить"><svg><use href="#gear"/></svg></button></li>
          <li><i class="chev right"></i><h4>Сохранить документы</h4><span><svg><use href="#help"/></svg></span><button type="button" aria-label="Сбросить"><svg><use href="#undo"/></svg></button></li>
          <li><i class="chev right"></i><h4>Показать файлы</h4><span><svg><use href="#help"/></svg></span><span class="cell"><input type="checkbox" checked aria-label="Показать файлы"></span><button type="button" aria-label="Сбросить"><svg><use href="#undo"/></svg></button></li>
        </ol>
      </div>
    </aside>
  </main>

  <div class="splitter-h"><button type="button" aria-label="Скрыть отчет"><i class="chev down"></i></button></div>

  <section class="report">
    <header><h2>Отчет об инструменте</h2><button type="button" aria-label="Закрыть отчет">×</button></header>
    <div class="report-box">
      <p>Нету сообщений для Отчета.</p>
      <div class="toolbar">
        <button type="button" disabled><svg><use href="#tExpand"/></svg>Раскрыть все</button>
        <button type="button" disabled><svg><use href="#tCollapse"/></svg>Свернуть все</button>
        <button type="button" disabled><svg><use href="#tTrash"/></svg>Очистить</button>
        <button type="button" disabled><svg><use href="#tSave"/></svg>Сохранить Отчет...</button>
        <button type="button"><svg><use href="#tParams"/></svg>Параметры...</button>
      </div>
    </div>
  </section>
</body>
</html>
```
FILE: styles.css
```css
* {
  box-sizing: border-box;
}
body {
  margin: 0;
  height: 100vh;
  display: flex;
  flex-direction: column;
  overflow: hidden;
  background: #fff;
  color: #000;
  font: 11px/15px "Noto Sans", "Segoe UI", sans-serif;
}
h1, h2, h3, h4, p, ul, ol {
  margin: 0;
  padding: 0;
  font-size: 11px;
  font-weight: normal;
}
ul, ol {
  list-style: none;
}
button {
  padding: 0;
  border: 0;
  background: none;
  color: inherit;
  font: inherit;
  cursor: pointer;
}
svg {
  flex: none;
}
.gradients {
  position: absolute;
  width: 0;
  height: 0;
}
.sprite {
  display: none;
}
.txt-label {
  font: bold 12px "Noto Sans", sans-serif;
  fill: #fff;
}
.office-letter {
  font: bold 15px "Noto Sans", sans-serif;
  fill: #fff;
}

/* title bar */
.titlebar {
  display: flex;
  align-items: center;
  height: 23px;
  padding-right: 2px;
  background: #0078d7;
  color: #fff;
}
.logo {
  width: 17px;
  height: 17px;
  margin: 0 4px 0 2px;
}
.titlebar h1 {
  flex: 1;
}
.win-btn {
  display: flex;
  justify-content: center;
  width: 46px;
}
.win-btn svg {
  width: 12px;
  height: 12px;
  fill: none;
  stroke: #fff;
}

/* toolbars */
.toolbar {
  display: flex;
  height: 30px;
}
.toolbar button {
  display: flex;
  align-items: center;
  gap: 4px;
  padding: 0 4px 2px;
  border-right: 1px solid #ccc;
}
.toolbar button:last-child {
  border-right: 0;
}
.toolbar svg,
.cat-toolbar svg {
  width: 23px;
  height: 23px;
}
.toolbar .run {
  font-weight: bold;
}
button:disabled {
  color: #858585;
}
button:disabled svg {
  opacity: .5;
}
.caret {
  width: 5px;
  height: 5px;
  margin: 0 1px 3px 4px;
  border: solid #444;
  border-width: 0 2px 2px 0;
  transform: rotate(45deg);
}

/* licence banner */
.banner {
  display: flex;
  align-items: center;
  gap: 2px;
  height: 28px;
  padding: 0 3px 0 4px;
  border-bottom: 1px solid #ccc;
  background: #fde8c8;
}
.banner svg {
  width: 16px;
  height: 17px;
  margin-right: 3px;
}
.banner p {
  flex: 1;
}
.banner button {
  width: 67px;
  height: 21px;
  border: 1px solid #a08a70;
  border-radius: 3px;
}
a {
  color: #1a0dcc;
}

/* workspace */
.workspace {
  display: flex;
  flex: 1;
  min-height: 0;
}
.panel {
  display: flex;
  flex-direction: column;
  min-width: 0;
}
.panel h2 {
  height: 23px;
  padding: 3px 5px;
  color: #1a4a80;
}
.panel-box {
  display: flex;
  flex-direction: column;
  flex: 1;
  min-height: 0;
  overflow: hidden;
  border: 1px solid #ddd;
}
.splitter {
  display: flex;
  align-items: center;
  width: 9px;
  background: linear-gradient(#ccc, #ccc) 4px 0 / 1px 100% no-repeat;
}
.splitter button {
  display: flex;
  align-items: center;
  justify-content: center;
  width: 7px;
  height: 60px;
  margin-left: 1px;
  border-radius: 3px;
  background: #dcdcdc;
}
.chev {
  width: 5px;
  height: 5px;
  border: solid #333;
  border-width: 1px 1px 0 0;
}
.chev.right { transform: rotate(45deg); }
.chev.down { transform: rotate(135deg); }
.chev.left { transform: rotate(225deg); }
.chev.up { transform: rotate(315deg); }
.splitter .chev,
.splitter-h .chev {
  border-width: 2px 2px 0 0;
}

/* categories */
.categories {
  width: 175px;
}
.cat-toolbar {
  display: flex;
  align-items: center;
  gap: 6px;
  height: 30px;
  padding: 0 0 3px 2px;
}
.cat-toolbar button {
  display: flex;
  align-items: center;
  gap: 4px;
}
.categories ul a {
  display: flex;
  align-items: center;
  height: 23px;
  padding-left: 2px;
  color: #111;
  font-size: 12px;
  text-decoration: none;
  white-space: pre;
}
.categories ul svg {
  width: 20px;
  height: 18px;
  margin-right: 2px;
}
.categories b {
  color: #1a78c8;
  font-weight: normal;
}
.categories .all {
  margin: 2px 0 4px;
  padding: 3px 0;
  border: solid #bbb;
  border-width: 1px 0;
}
.all a {
  background: #d6d6d6;
  outline: 1px solid #aaa;
  outline-offset: -1px;
}
.scroll-x {
  display: flex;
  align-items: center;
  gap: 4px;
  height: 16px;
  margin-top: auto;
  padding: 0 5px;
  background: #f0f0f0;
}
.scroll-x span {
  width: 109px;
  height: 6px;
  margin-right: auto;
  border-radius: 3px;
  background: #828282;
}

/* tool list */
.tools {
  flex: 1;
}
.tools h2 {
  color: #222;
}
.search {
  display: flex;
  align-items: center;
  gap: 3px;
  height: 24px;
  padding: 0 3px 1px;
  border: 1px solid #c4c4c4;
  border-bottom: 3px double #b4b4b4;
}
.search svg {
  width: 13px;
  height: 13px;
}
.search input {
  flex: 1;
  padding: 0;
  border: 0;
  outline: 0;
  background: none;
  font: inherit;
}
.search input::placeholder {
  color: #858585;
}
.tool-view {
  display: flex;
  flex: 1;
  min-height: 0;
  border: 1px solid #ddd;
  border-top: 0;
}
/* list is scrolled to its end */
.tool-grid {
  display: grid;
  flex: 1;
  grid-template-columns: repeat(auto-fill, 464px);
  grid-auto-rows: 60px;
  align-content: end;
  overflow: hidden;
  padding-left: 5px;
}
.tool-grid article {
  display: flex;
  gap: 6px;
  padding-top: 7px;
}
.tool-grid article > svg,
.info-head .big {
  width: 48px;
  height: 48px;
}
.tool-grid h3,
.info-head h3 {
  display: flex;
  margin-bottom: 2px;
  font-weight: bold;
  white-space: nowrap;
}
.tool-grid p,
.info-head p {
  color: #606060;
  white-space: nowrap;
}
.tool-grid h3 svg {
  width: 11px;
  height: 11px;
  margin: -2px 0 0 4px;
  opacity: .35;
}
.scroll-y {
  display: flex;
  flex-direction: column;
  align-items: center;
  width: 14px;
  padding: 6px 0;
  background: #f0f0f0;
}
.scroll-y span {
  width: 5px;
  height: 310px;
  margin: auto 0 5px;
  border-radius: 3px;
  background: #828282;
}

/* info panel */
.info {
  width: 260px;
}
.info-head {
  display: flex;
  gap: 6px;
  height: 77px;
  margin: 0 6px;
  padding: 5px 0 0 6px;
  border-bottom: 1px solid #ccc;
}
.info-head .big {
  margin-top: 8px;
}
.info-head > div:nth-child(2) {
  width: 130px;
}
.info-head h3 {
  display: block;
}
.marks {
  display: flex;
  gap: 6px;
  height: 10px;
  margin: -2px 5px 0 auto;
}
.marks svg {
  width: 9px;
  height: 9px;
  opacity: .35;
}
.marks .solid {
  opacity: 1;
}
.marks i {
  border-left: 1px solid #777;
}
.options {
  padding: 3px 5px 1px;
  border-bottom: 1px solid #ddd;
}
.options label {
  display: flex;
  align-items: center;
  gap: 4px;
  height: 21px;
  font-size: 12px;
}
.options label svg {
  width: 14px;
  height: 14px;
}
.options a {
  display: block;
  height: 17px;
  margin: 1px 0 0 1px;
}
input[type="checkbox"] {
  appearance: none;
  display: flex;
  align-items: center;
  justify-content: center;
  flex: none;
  width: 17px;
  height: 17px;
  margin: 0;
  border: 1px solid #707070;
  border-radius: 2px;
  background: #fff;
}
input[type="checkbox"]:checked::after {
  content: "";
  width: 8px;
  height: 4px;
  margin-bottom: 3px;
  border: solid #174a7c;
  border-width: 0 0 2px 2px;
  transform: rotate(-45deg);
}
.steps {
  display: flex;
  flex-direction: column;
  gap: 11px;
  padding: 5px;
}
.steps li {
  position: relative;
  display: flex;
  align-items: center;
  height: 27px;
  border: 1px solid #b4b4b4;
  border-radius: 4px;
  background: linear-gradient(#fff, #eee);
}
/* pointer to the next step */
.steps li:not(:last-child)::after {
  content: "";
  position: absolute;
  top: 20px;
  left: 50%;
  width: 11px;
  height: 11px;
  margin-left: -6px;
  border: solid #b4b4b4;
  border-width: 0 1px 1px 0;
  background: linear-gradient(135deg, transparent 50%, #eee 50%);
  transform: rotate(45deg);
}
.steps .chev {
  width: 6px;
  height: 6px;
  margin: 0 9px 0 4px;
  border-color: #888;
  border-width: 2px 2px 0 0;
}
.steps h4 {
  flex: 1;
  color: #505050;
  font-weight: bold;
  white-space: nowrap;
}
.steps span,
.steps button {
  display: flex;
  align-items: center;
  justify-content: center;
  width: 25px;
  height: 21px;
}
.steps button,
.steps .cell {
  border-left: 1px solid #ddd;
}
.steps svg {
  width: 16px;
  height: 16px;
}
.steps .off {
  color: #c0c0c0;
}
.steps .off h4 {
  color: #999;
}

/* report */
.splitter-h {
  display: flex;
  align-items: center;
  justify-content: center;
  height: 9px;
  background: linear-gradient(#ccc, #ccc) 0 4px / 100% 1px no-repeat;
}
.splitter-h button {
  display: flex;
  align-items: center;
  justify-content: center;
  width: 60px;
  height: 7px;
  border-radius: 3px;
  background: #dcdcdc;
}
.report {
  display: flex;
  flex-direction: column;
  height: 181px;
}
.report header {
  display: flex;
  align-items: center;
  justify-content: space-between;
  height: 24px;
  padding: 0 5px 2px;
}
.report h2 {
  color: #1a4a80;
}
.report header button {
  font-size: 15px;
}
.report-box {
  display: flex;
  flex-direction: column;
  flex: 1;
  border: 1px solid #ddd;
}
.report-box p {
  flex: 1;
  display: flex;
  align-items: center;
  justify-content: center;
  padding-bottom: 2px;
  color: #858585;
}
.report-box .toolbar {
  height: 28px;
}
.report-box .toolbar button:nth-child(1),
.report-box .toolbar button:nth-child(3) {
  border-right: 0;
}
```
